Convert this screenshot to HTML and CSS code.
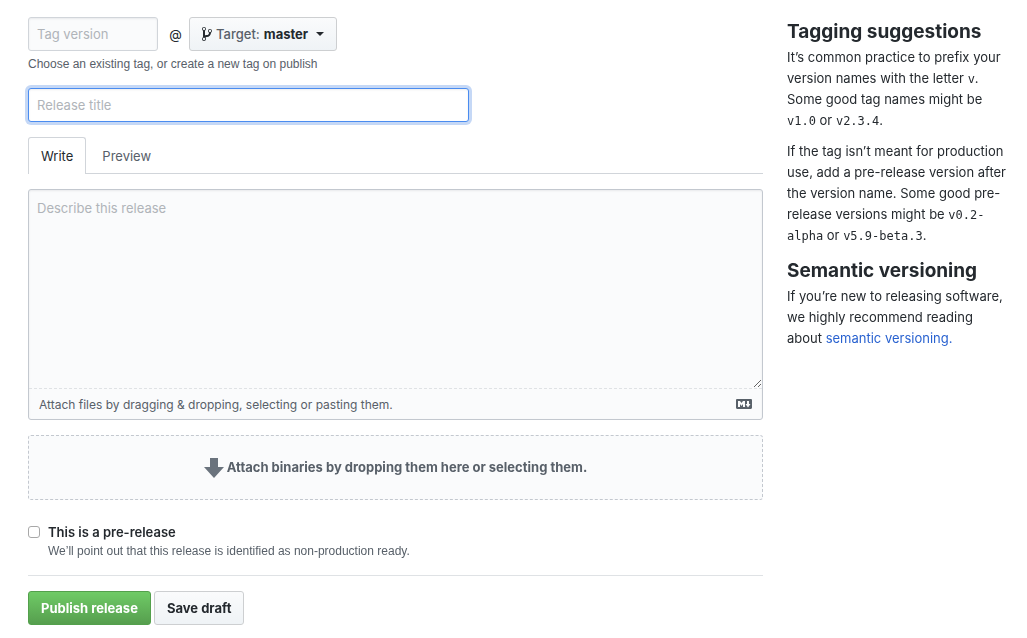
FILE: index.html
```html
<!DOCTYPE html>
<html lang="en">
<head>
    <meta charset="UTF-8">
    <meta name="viewport" content="width=device-width, initial-scale=1.0">
    <title>New release</title>
    <link rel="stylesheet" href="styles.css">
</head>
<body>

<div class="container">
    <form class="release-form">
        <div class="tag-row">
            <input type="text" class="field tag-input" placeholder="Tag version" aria-label="Tag version">
            <span class="at">@</span>
            <button type="button" class="btn btn-target">
                <svg width="10" height="16" viewBox="0 0 10 16" aria-hidden="true"><path fill="currentColor" fill-rule="evenodd" d="M10 5c0-1.11-.89-2-2-2a1.993 1.993 0 0 0-1 3.72v.3c-.02.52-.23.98-.63 1.38-.4.4-.86.61-1.38.63-.83.02-1.48.16-2 .45V4.72a1.993 1.993 0 0 0-1-3.72C.88 1 0 1.89 0 3a2 2 0 0 0 1 1.72v6.56c-.59.35-1 .99-1 1.72 0 1.11.89 2 2 2 1.11 0 2-.89 2-2 0-.53-.2-1-.53-1.36.09-.06.48-.41.59-.47.25-.11.56-.17.94-.17 1.05-.05 1.95-.45 2.75-1.25S8.95 7.77 9 6.73h-.02C9.59 6.37 10 5.73 10 5zM2 1.8c.66 0 1.2.55 1.2 1.2 0 .65-.55 1.2-1.2 1.2C1.35 4.2.8 3.65.8 3c0-.65.55-1.2 1.2-1.2zm0 12.41c-.66 0-1.2-.55-1.2-1.2 0-.65.55-1.2 1.2-1.2.65 0 1.2.55 1.2 1.2 0 .65-.55 1.2-1.2 1.2zm6-8c-.66 0-1.2-.55-1.2-1.2 0-.65.55-1.2 1.2-1.2.65 0 1.2.55 1.2 1.2 0 .65-.55 1.2-1.2 1.2z"/></svg>
                <span class="target-label">Target:</span>
                <span>master</span>
                <span class="caret"></span>
            </button>
        </div>
        <p class="note tag-note">Choose an existing tag, or create a new tag on publish</p>

        <input type="text" class="field title-input" placeholder="Release title" aria-label="Release title" autofocus>

        <div class="tabs">
            <button type="button" class="tab selected">Write</button>
            <button type="button" class="tab">Preview</button>
        </div>

        <div class="editor">
            <textarea class="description" placeholder="Describe this release" aria-label="Describe this release"></textarea>
            <div class="attach-bar">
                <span>Attach files by dragging &amp; dropping, selecting or pasting them.</span>
                <svg width="16" height="16" viewBox="0 0 16 16" aria-hidden="true"><path fill="currentColor" fill-rule="evenodd" d="M14.85 3H1.15C.52 3 0 3.52 0 4.15v7.69C0 12.48.52 13 1.15 13h13.69c.64 0 1.15-.52 1.15-1.15v-7.7C16 3.52 15.48 3 14.85 3zM9 11H7V8L5.5 9.92 4 8v3H2V5h2l1.500 2L7 5h2v6zm2.990.5L9.500 8H11V5h2v3h1.500l-2.510 3.500z"/></svg>
            </div>
        </div>

        <div class="drop-zone">
            <svg width="20" height="20" viewBox="0 0 20 20" aria-hidden="true"><path fill="currentColor" d="M6 0h8v9h6L10 20 0 9h6z"/></svg>
            <span>Attach binaries by dropping them here or selecting them.</span>
        </div>

        <div class="prerelease">
            <input type="checkbox" id="prerelease" class="check">
            <div>
                <label for="prerelease">This is a pre-release</label>
                <p class="note">We’ll point out that this release is identified as non-production ready.</p>
            </div>
        </div>

        <div class="actions">
            <button type="submit" class="btn btn-primary">Publish release</button>
            <button type="button" class="btn">Save draft</button>
        </div>
    </form>

    <aside class="sidebar">
        <h2>Tagging suggestions</h2>
        <p>It’s common practice to prefix your version names with the letter <code>v</code>. Some good tag names might be <code>v1.0</code> or <code>v2.3.4</code>.</p>
        <p>If the tag isn’t meant for production use, add a pre-release version after the version name. Some good pre-release versions might be <code>v0.2-alpha</code> or <code>v5.9-beta.3</code>.</p>
        <h2>Semantic versioning</h2>
        <p>If you’re new to releasing software, we highly recommend reading about <a href="#">semantic versioning.</a></p>
    </aside>
</div>

</body>
</html>
```
FILE: styles.css
```css
* {
    box-sizing: border-box;
}
body {
    margin: 0;
    background: #fff;
    color: #24292e;
    font-family: Inter, "Liberation Sans", sans-serif;
    font-size: 13px;
    line-height: 21px;
}
p, h2 {
    margin: 0;
}
input, textarea, button {
    font: inherit;
    color: inherit;
}
.container {
    display: flex;
    gap: 24px;
    padding: 17px 20px 12px 28px;
}
.release-form {
    flex: 1;
    min-width: 0;
}
.field {
    display: block;
    height: 34px;
    padding: 0 8px;
    background: #fafbfc;
    border: 1px solid #d1d5da;
    border-radius: 3px;
    box-shadow: inset 0 1px 2px rgba(27, 31, 35, 0.075);
    outline: none;
}
::placeholder {
    color: #b0b4b9;
    opacity: 1;
}
.tag-row {
    display: flex;
    align-items: center;
}
.tag-input {
    width: 130px;
}
.at {
    width: 31px;
    padding-left: 4px;
    text-align: center;
}
.btn {
    height: 34px;
    padding: 0 12px;
    font-weight: 700;
    white-space: nowrap;
    background: linear-gradient(#fafbfc, #eff3f6);
    border: 1px solid #cdcfd1;
    border-radius: 3px;
    cursor: pointer;
}
.btn-target {
    display: flex;
    align-items: center;
    gap: 4px;
}
.target-label {
    color: #586069;
    font-weight: 500;
}
.caret {
    margin-left: 4px;
    border: 4px solid transparent;
    border-top-color: #24292e;
    border-bottom: 0;
}
.note {
    color: #586069;
    font-family: "Liberation Sans", Arial, sans-serif;
    font-size: 12px;
    line-height: 18px;
}
.tag-note {
    margin: 4px 0 15px;
}
.title-input {
    width: 60%;
}
.title-input:focus {
    background: #fff;
    border-color: #4a8cf0;
    box-shadow: inset 0 1px 2px rgba(27, 31, 35, 0.075), 0 0 0 3px #c5d8f6;
}
.tabs {
    display: flex;
    margin: 15px 0;
    border-bottom: 1px solid #d1d5da;
}
.tab {
    height: 37px;
    margin-bottom: -1px;
    padding: 0 12px;
    color: #586069;
    background: none;
    border: 1px solid transparent;
    border-bottom: 0;
    border-radius: 3px 3px 0 0;
    cursor: pointer;
}
.tab + .tab {
    margin-left: 3px;
}
.tab.selected {
    color: #24292e;
    background: #fff;
    border-color: #d1d5da;
}
.editor {
    background: #fafbfc;
    border: 1px solid #c3c8cf;
    border-radius: 3px;
    box-shadow: inset 0 1px 2px rgba(27, 31, 35, 0.075);
}
.description {
    display: block;
    width: 100%;
    height: 199px;
    padding: 8px;
    background: transparent;
    border: 0;
    border-bottom: 1px dashed #dfe2e5;
    outline: none;
    resize: vertical;
}
.attach-bar {
    display: flex;
    align-items: center;
    justify-content: space-between;
    height: 30px;
    padding: 0 10px;
    color: #586069;
    font-size: 12px;
}
.drop-zone {
    display: flex;
    align-items: center;
    justify-content: center;
    gap: 3px;
    height: 65px;
    margin-top: 15px;
    color: #586069;
    font-weight: 700;
    background: #fafbfc;
    border: 1px dashed #c3c8cf;
    border-radius: 3px;
}
.drop-zone svg {
    color: #6a737d;
}
.prerelease {
    display: flex;
    gap: 8px;
    margin-top: 22px;
    padding-bottom: 15px;
    border-bottom: 1px solid #dfe2e5;
}
.prerelease label {
    display: block;
    line-height: 20px;
    font-weight: 600;
}
.check {
    appearance: none;
    width: 12px;
    height: 12px;
    margin: 4px 0;
    background: #fff;
    border: 1px solid #a8a8a8;
    border-radius: 3px;
}
.check:checked {
    background: #0366d6;
}
.actions {
    display: flex;
    gap: 3px;
    margin-top: 15px;
}
.btn-primary {
    color: #fff;
    background: linear-gradient(#6fcb66, #569e4e);
    border-color: #53a04c;
}
.sidebar {
    flex: 0 0 220px;
}
.sidebar h2 {
    font-size: 19px;
    line-height: 30px;
    font-weight: 700;
}
.sidebar p {
    margin-bottom: 10px;
}
.sidebar code {
    font-family: "DejaVu Sans Mono", monospace;
    font-size: 12px;
    line-height: 12px;
}
.sidebar a {
    color: #2962d0;
    text-decoration: none;
}
```
